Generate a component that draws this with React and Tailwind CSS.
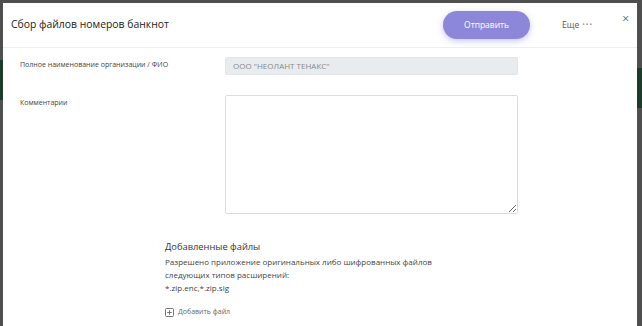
export default function App() {
  const font = { fontFamily: '"Open Sans", "Noto Sans", sans-serif' };
  return (
    <div className="relative w-[642px] h-[326px] overflow-hidden bg-[#4f4f4f]" style={font}>
      <div className="absolute left-0 top-[60px] w-[3px] h-[40px] bg-[#1d3a2b]" />
      <div className="absolute right-0 top-[68px] w-[5px] h-[40px] bg-[#1d3a2b]" />
      <div className="absolute left-[3px] top-[3px] w-[634px] h-[340px] bg-white flex flex-col">
        <div className="h-[45px] flex items-center border-b border-[#eeeeee] pl-[8px] pr-[8px]">
          <div className="text-[10.4px] text-[#222] flex-1">Сбор файлов номеров банкнот</div>
          <button className="w-[87px] h-[28px] rounded-full bg-[#8c87d8] text-white text-[8.5px] shadow-[0_2px_6px_rgba(100,90,200,0.35)]">Отправить</button>
          <div className="ml-[32px] text-[8.5px] text-[#555] flex items-center gap-[3px]">
            Еще <span className="tracking-[1px] text-[#999] text-[7px]">•••</span>
          </div>
          <div className="ml-[29px] text-[#666] text-[12px] leading-none -mt-[12px]">×</div>
        </div>
        <div className="flex items-start pl-[17px] pt-[9px]">
          <div className="w-[205px] text-[7px] text-[#444] pt-[3px]">Полное наименование организации / ФИО</div>
          <div className="w-[293px] h-[18px] rounded-[2px] bg-[#e9ecef] border border-[#e2e5e8] text-[8px] text-[#888] flex items-center pl-[7px]">ООО "НЕОЛАНТ ТЕНАКС"</div>
        </div>
        <div className="flex items-start pl-[17px] pt-[20px]">
          <div className="w-[205px] text-[7px] text-[#444] pt-[3px]">Комментарии</div>
          <textarea className="w-[293px] h-[119px] rounded-[2px] border border-[#dcdcdc] outline-none" />
        </div>
        <div className="pl-[162px] pt-[26px]">
          <div className="text-[9.3px] text-[#333] font-medium">Добавленные файлы</div>
          <div className="mt-[1px] text-[8px] text-[#444] leading-[13px]">
            <div>Разрешено приложение оригинальных либо шифрованных файлов</div>
            <div>следующих типов расширений:</div>
            <div>*.zip.enc,*.zip.sig</div>
          </div>
          <div className="mt-[13px] flex items-center gap-[4px] text-[7px] text-[#666]">
            <svg width="9" height="9" viewBox="0 0 9 9" fill="none" stroke="#666" strokeWidth="0.9">
              <rect x="0.5" y="0.5" width="8" height="8" rx="1" />
              <path d="M4.5 2.2v4.6M2.2 4.5h4.6" />
            </svg>
            Добавить файл
          </div>
        </div>
      </div>
    </div>
  );
}
